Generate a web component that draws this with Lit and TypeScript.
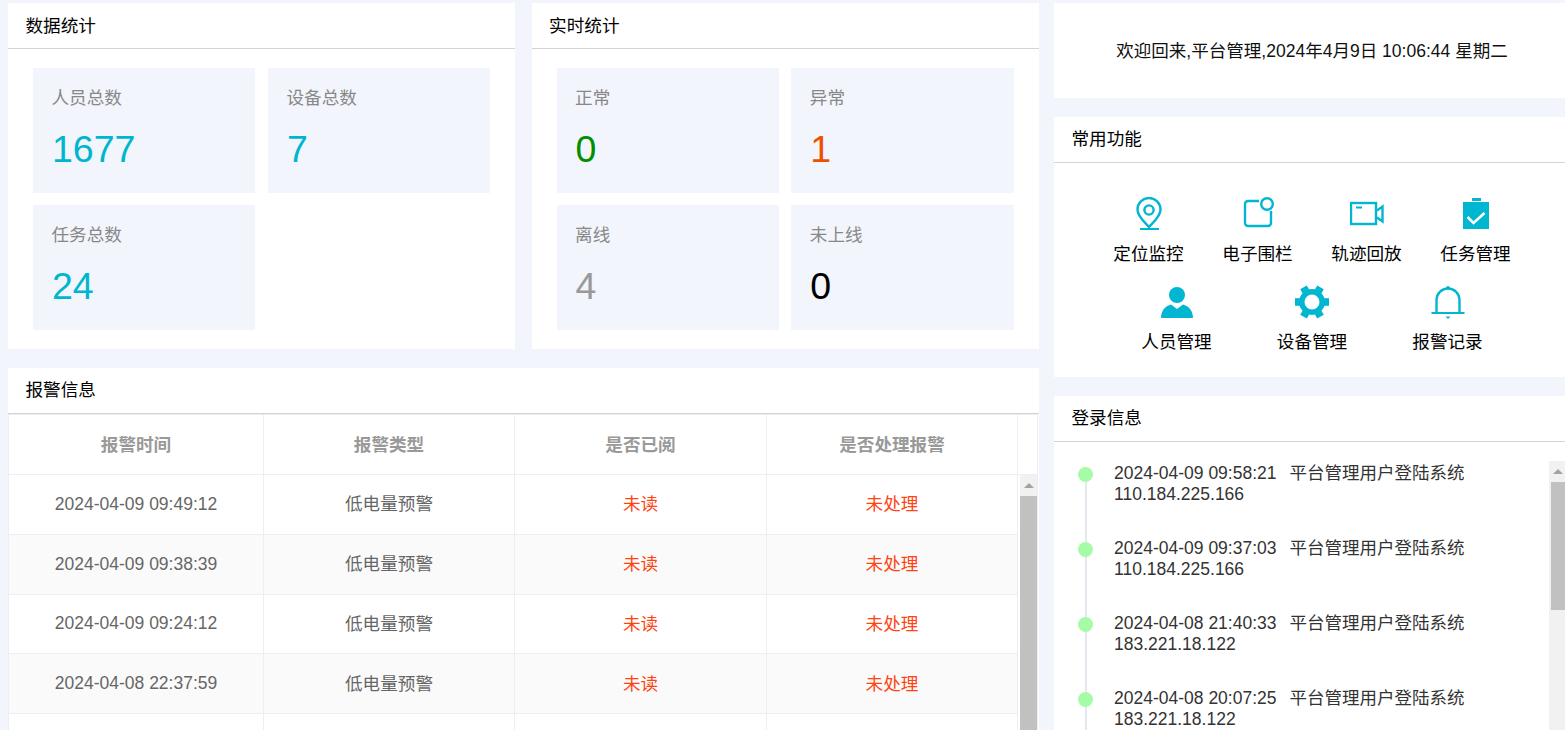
import { LitElement, html, css, svg } from "lit";
import { customElement } from "lit/decorators.js";

const F1 = [
  { name: "定位监控", icon: svg`<path d="M17 30 C13 25 5.5 20 5.5 12.5 A11.5 11.5 0 0 1 28.5 12.5 C28.5 20 21 25 17 30Z" fill="none" stroke="currentColor" stroke-width="2.4"/><circle cx="17" cy="13" r="4.6" fill="none" stroke="currentColor" stroke-width="2.4"/><path d="M8 32 H27" stroke="currentColor" stroke-width="2"/>` },
  { name: "电子围栏", icon: svg`<path d="M18 4 H7 a3 3 0 0 0 -3 3 V26 a3 3 0 0 0 3 3 H27 a3 3 0 0 0 3 -3 V14" fill="none" stroke="currentColor" stroke-width="2.4"/><circle cx="26" cy="7" r="5.8" fill="none" stroke="currentColor" stroke-width="2.4"/>` },
  { name: "轨迹回放", icon: svg`<rect x="1" y="6" width="25" height="21" fill="none" stroke="currentColor" stroke-width="2.4"/><path d="M6 10.5 H12" stroke="currentColor" stroke-width="2"/><path d="M27 13.5 L32.5 9.5 V24.5 L27 20.5" fill="none" stroke="currentColor" stroke-width="2.4"/>` },
  { name: "任务管理", icon: svg`<rect x="4" y="5" width="26" height="27" fill="currentColor"/><rect x="13" y="1" width="9" height="3" fill="currentColor"/><path d="M8.5 20 L14.5 26 L25.5 16" fill="none" stroke="#fff" stroke-width="2.6"/>` },
];
const F2 = [
  { name: "人员管理", icon: svg`<circle cx="17" cy="10" r="8" fill="currentColor"/><path d="M1 33 C1 25 6 21 11 19.5 L17 24 L23 19.5 C28 21 33 25 33 33Z" fill="currentColor"/>` },
  { name: "设备管理", icon: svg`<circle cx="17" cy="17" r="10.2" fill="none" stroke="currentColor" stroke-width="5.4"/>${[0, 60, 120, 180, 240, 300].map((a) => svg`<rect x="27" y="13.2" width="7" height="7.6" fill="currentColor" transform="rotate(${a} 17 17)"/>`)}` },
  { name: "报警记录", icon: svg`<path d="M0.5 28 H33.5" stroke="currentColor" stroke-width="2"/><path d="M5.5 28 V15 a11.5 11.5 0 0 1 23 0 V28" fill="none" stroke="currentColor" stroke-width="2.4"/><circle cx="17" cy="2.8" r="1.8" fill="currentColor"/><path d="M14.5 31.5 H19.5 L17 34Z" fill="currentColor"/>` },
];
const ALERTS = ["2024-04-09 09:49:12", "2024-04-09 09:38:39", "2024-04-09 09:24:12", "2024-04-08 22:37:59"];
const LOGINS = [
  ["2024-04-09 09:58:21", "110.184.225.166"],
  ["2024-04-09 09:37:03", "110.184.225.166"],
  ["2024-04-08 21:40:33", "183.221.18.122"],
  ["2024-04-08 20:07:25", "183.221.18.122"],
];

@customElement("app-root")
export class AppRoot extends LitElement {
  static styles = css`
    :host { display: block; height: 730px; overflow: hidden; background: #f2f5fc; font-family: "Liberation Sans", "Noto Sans CJK SC", sans-serif; font-size: 17.5px; color: #000; }
    .page { display: grid; grid-template-columns: 1031px 511px; column-gap: 15px; padding: 3px 0 0 8px; height: 727px; }
    .col { display: flex; flex-direction: column; gap: 19px; min-height: 0; min-width: 0; }
    .toprow { display: grid; grid-template-columns: 507px 507.4px; column-gap: 16.6px; }
    .toprow .head { line-height: 47px; }
    .card { background: #fff; display: flex; flex-direction: column; min-height: 0; }
    .grow { flex: 1; }
    .head { height: 45px; line-height: 45px; padding-left: 17.5px; border-bottom: 1px solid #d3d3d6; font-size: 17.6px; flex: none; }
    .stats { display: grid; grid-template-columns: 222px 222px; gap: 12px 13px; padding: 19px 25px; grid-auto-rows: 125px; }
    .stats.alt { grid-template-columns: 1fr 1fr; gap: 12px; }
    .tile { background: #f2f5fc; padding: 18px 0 0 18.5px; box-sizing: border-box; }
    .tile .lab { font-size: 17.6px; line-height: 24px; color: #888; }
    .tile .num { font-size: 37.5px; line-height: 44px; margin: 17px 0 0 0.5px; }
    .cyan { color: #00b6ce; } .green { color: #008f00; } .orange { color: #ee5000; } .gray { color: #999; } .black { color: #000; }
    .welcome { height: 95px; box-sizing: border-box; padding: 0 0 2px 5px; display: flex; align-items: center; justify-content: center; color: #111; font-size: 17.55px; flex: none; }
    .func { padding: 34px 0 0 5px; height: 214px; box-sizing: border-box; display: flex; flex-direction: column; gap: 19px; flex: none; }
    .frow { display: grid; justify-content: center; }
    .frow.four { grid-template-columns: repeat(4, 109px); }
    .frow.three { grid-template-columns: repeat(3, 135.5px); }
    .fitem { display: flex; flex-direction: column; align-items: center; gap: 11px; }
    .fitem svg { width: 34px; height: 34px; color: #00b6d0; display: block; }
    .fitem span { line-height: 24px; font-size: 17.6px; }
    .table { flex: 1; min-height: 0; display: flex; flex-direction: column; border: 1px solid #ebeef5; border-bottom: none; margin-right: 1px; overflow: hidden; }
    .thead, .tr { display: grid; grid-template-columns: 255px 251px 252px 251px; }
    .thead { grid-template-columns: 255px 251px 252px 251px 1fr; height: 60px; border-bottom: 1px solid #ebeef5; box-sizing: border-box; flex: none; }
    .th { display: flex; align-items: center; justify-content: center; border-right: 1px solid #ebeef5; font-weight: 700; color: #999; font-size: 17.6px; padding-bottom: 2px; }
    .th:last-child { border-right: none; }
    .tbody { flex: 1; min-height: 0; display: flex; gap: 2px; }
    .rows { width: 1009px; flex: none; }
    .tr { height: 59.75px; box-sizing: border-box; border-bottom: 1px solid #ebeef5; }
    .tr:nth-child(even) { background: #fafafa; }
    .td { display: flex; align-items: center; justify-content: center; border-right: 1px solid #ebeef5; color: #666; font-size: 17.6px; padding-bottom: 3px; box-sizing: border-box; }
    .td.time { font-size: 17.5px; padding-bottom: 0; }
    .td.red { color: #ff4412; }
    .sb { background: #f1f1f1; display: flex; flex-direction: column; flex: none; }
    .sb .up { height: 21px; display: flex; align-items: center; justify-content: center; flex: none; }
    .sb .up i { width: 0; height: 0; border-left: 5px solid transparent; border-right: 5px solid transparent; border-bottom: 5px solid #a3a3a3; }
    .sb .thumb { background: #c1c1c1; flex: none; }
    .sb.tsb { width: 17px; }
    .sb.tsb .thumb { height: 400px; }
    .sb.lsb { width: 14px; padding-left: 2px; align-self: flex-start; height: 300px; }
    .sb.lsb .thumb { height: 128px; }
    .login { flex: 1; min-height: 0; display: flex; justify-content: space-between; padding-top: 19px; overflow: hidden; }
    .tl { padding: 2px 0 0 24px; }
    .titem { display: flex; gap: 21px; height: 75px; }
    .rail { width: 15px; flex: none; background: linear-gradient(#e4e7ed, #e4e7ed) center / 2px 100% no-repeat; }
    .titem:first-child .rail { background-size: 2px calc(100% - 8px); background-position: center bottom; }
    .dot { width: 15px; height: 15px; border-radius: 50%; background: #a6fba6; margin-top: 4px; }
    .ttext { color: #333; line-height: 21px; font-size: 17.5px; }
    .ttext b { font-weight: 400; margin-left: 13px; font-size: 17.5px; }
  `;

  private head(t: string) { return html`<div class="head">${t}</div>`; }
  private tile(l: string, n: string, c: string) {
    return html`<div class="tile"><div class="lab">${l}</div><div class="num ${c}">${n}</div></div>`;
  }
  private fitem(f: { name: string; icon: unknown }) {
    return html`<div class="fitem"><svg viewBox="0 0 34 34">${f.icon}</svg><span>${f.name}</span></div>`;
  }

  render() {
    return html`<div class="page">
      <div class="col">
        <div class="toprow">
          <div class="card">
            ${this.head("数据统计")}
            <div class="stats">
              ${this.tile("人员总数", "1677", "cyan")}
              ${this.tile("设备总数", "7", "cyan")}
              ${this.tile("任务总数", "24", "cyan")}
            </div>
          </div>
          <div class="card">
            ${this.head("实时统计")}
            <div class="stats alt">
              ${this.tile("正常", "0", "green")}
              ${this.tile("异常", "1", "orange")}
              ${this.tile("离线", "4", "gray")}
              ${this.tile("未上线", "0", "black")}
            </div>
          </div>
        </div>
        <div class="card grow">
          ${this.head("报警信息")}
          <div class="table">
            <div class="thead">
              ${["报警时间", "报警类型", "是否已阅", "是否处理报警", ""].map((t) => html`<div class="th">${t}</div>`)}
            </div>
            <div class="tbody">
              <div class="rows">
                ${ALERTS.map((t) => html`<div class="tr">
                  <div class="td time">${t}</div><div class="td">低电量预警</div>
                  <div class="td red">未读</div><div class="td red">未处理</div>
                </div>`)}
                <div class="tr"><div class="td"></div><div class="td"></div><div class="td"></div><div class="td"></div></div>
              </div>
              <div class="sb tsb"><div class="up"><i></i></div><div class="thumb"></div></div>
            </div>
          </div>
        </div>
      </div>
      <div class="col">
        <div class="card welcome">欢迎回来,平台管理,2024年4月9日 10:06:44 星期二</div>
        <div class="card">
          ${this.head("常用功能")}
          <div class="func">
            <div class="frow four">${F1.map((f) => this.fitem(f))}</div>
            <div class="frow three">${F2.map((f) => this.fitem(f))}</div>
          </div>
        </div>
        <div class="card grow">
          ${this.head("登录信息")}
          <div class="login">
            <div class="tl">
              ${LOGINS.map(([t, ip]) => html`<div class="titem">
                <div class="rail"><div class="dot"></div></div>
                <div class="ttext">${t}<b>平台管理用户登陆系统</b><br />${ip}</div>
              </div>`)}
            </div>
            <div class="sb lsb"><div class="up"><i></i></div><div class="thumb"></div></div>
          </div>
        </div>
      </div>
    </div>`;
  }
}
